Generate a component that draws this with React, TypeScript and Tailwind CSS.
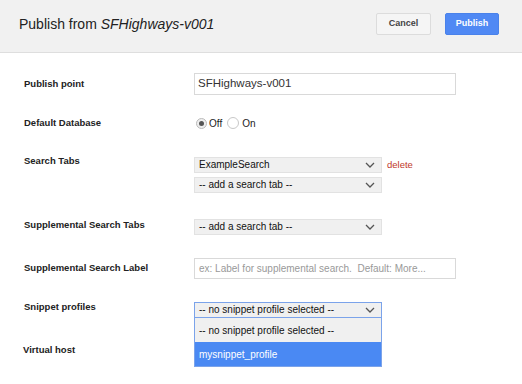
import React from "react"

const Chevron = () => (
    <svg width="10" height="6" viewBox="0 0 10 6" className="shrink-0">
        <path d="M1 1 L5 5 L9 1" fill="none" stroke="#555" strokeWidth="1.3" />
    </svg>
)

const FakeSelect: React.FC<{ text: string; focused?: boolean }> = ({ text, focused }) => (
    <div className={`w-[188px] h-[16px] bg-[#f0f0f0] border ${focused ? "border-[#7ba3ea]" : "border-[#e2e2e2]"} flex items-center justify-between pl-[4px] pr-[6px] text-[10px] text-[#111] leading-none`}>
        <span>{text}</span>
        <Chevron />
    </div>
)

const Label: React.FC<{ children: React.ReactNode; className?: string }> = ({ children, className }) => (
    <div className={`w-[170px] shrink-0 text-[9.5px] font-bold text-[#222] leading-[14px] ${className ?? ""}`}>{children}</div>
)

export default function App() {
    return (
        <div className="w-[522px] h-[384px] bg-white overflow-hidden font-['Liberation_Sans',Arial,sans-serif]">
            <div className="h-[53px] bg-[#f1f1f1] border-b border-[#dedede] flex items-center justify-between pl-[19px] pr-[23px]">
                <h1 className="text-[14px] text-[#222] -mt-[4px]">
                    Publish from <i>SFHighways-v001</i>
                </h1>
                <div className="flex gap-[14px] -mt-[4px]">
                    <button className="w-[55px] h-[22px] bg-[#f5f5f5] border border-[#dcdcdc] rounded-[2px] text-[9px] font-bold text-[#444]">Cancel</button>
                    <button className="w-[54px] h-[22px] bg-[#5089f4] border border-[#4a82ea] rounded-[2px] text-[9px] font-bold text-white">Publish</button>
                </div>
            </div>

            <div className="pl-[24px]">
                <div className="flex items-center mt-[20px]">
                    <Label>Publish point</Label>
                    <div className="w-[262px] h-[22px] border border-[#d9d9d9] flex items-center px-[3px] text-[11.5px] text-[#333]">SFHighways-v001</div>
                </div>

                <div className="flex items-center mt-[20px] h-[16px]">
                    <Label>Default Database</Label>
                    <div className="flex items-center text-[10px] text-[#222] ml-[2px]">
                        <span className="w-[11px] h-[11px] rounded-full border border-[#bbb] bg-[#eee] flex items-center justify-center">
                            <span className="w-[5px] h-[5px] rounded-full bg-[#555]" />
                        </span>
                        <span className="ml-[2px]">Off</span>
                        <span className="ml-[5px] w-[12px] h-[12px] rounded-full border border-[#c8c8c8] bg-white" />
                        <span className="ml-[3px]">On</span>
                    </div>
                </div>

                <div className="flex items-start mt-[26px]">
                    <Label className="-mt-[3px]">Search Tabs</Label>
                    <div className="flex flex-col gap-[4px]">
                        <div className="flex items-center">
                            <FakeSelect text="ExampleSearch" />
                            <span className="ml-[5px] text-[9.5px] text-[#c0392b]">delete</span>
                        </div>
                        <FakeSelect text="-- add a search tab --" />
                    </div>
                </div>

                <div className="flex items-center mt-[26px]">
                    <Label className="-mt-[5px]">Supplemental Search Tabs</Label>
                    <FakeSelect text="-- add a search tab --" />
                </div>

                <div className="flex items-center mt-[23px]">
                    <Label className="-mt-[2px]">Supplemental Search Label</Label>
                    <div className="w-[262px] h-[21px] border border-[#d9d9d9] flex items-center px-[4px] text-[10px] text-[#999] whitespace-nowrap">ex: Label for supplemental search.&nbsp; Default: More...</div>
                </div>

                <div className="flex items-center mt-[23px]">
                    <Label className="-mt-[7px]">Snippet profiles</Label>
                    <div className="relative">
                        <FakeSelect text="-- no snippet profile selected --" focused />
                        <div className="absolute left-0 top-[16px] w-[188px] border border-[#7ba3ea] border-t-0 text-[10px]">
                            <div className="h-[24px] bg-[#f0f0f0] text-[#111] flex items-center pl-[4px]">-- no snippet profile selected --</div>
                            <div className="h-[24px] bg-[#4a89f3] text-white flex items-center pl-[4px]">mysnippet_profile</div>
                        </div>
                    </div>
                </div>

                <div className="flex items-center mt-[25px] -ml-[1px]">
                    <Label>Virtual host</Label>
                </div>
            </div>
        </div>
    )
}
